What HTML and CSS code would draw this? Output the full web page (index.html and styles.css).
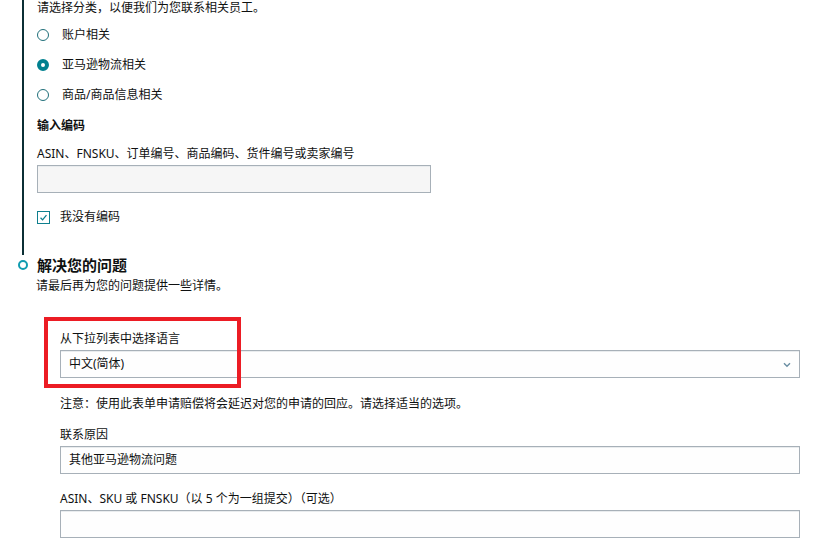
FILE: index.html
```html
<!DOCTYPE html>
<html lang="zh-CN">
<head>
<meta charset="utf-8">
<title>联系卖家支持</title>
<link rel="stylesheet" href="styles.css">
</head>
<body>
<div class="page">
  <section class="step step-one">
    <p class="intro">请选择分类，以便我们为您联系相关员工。</p>
    <div class="radios">
      <label class="radio-row"><span class="radio"></span><span>账户相关</span></label>
      <label class="radio-row"><span class="radio checked"></span><span>亚马逊物流相关</span></label>
      <label class="radio-row"><span class="radio"></span><span>商品/商品信息相关</span></label>
    </div>
    <h3 class="field-title">输入编码</h3>
    <div class="field-label">ASIN、FNSKU、订单编号、商品编码、货件编号或卖家编号</div>
    <div class="input input-disabled short"></div>
    <label class="check-row">
      <span class="checkbox">
        <svg viewBox="0 0 13 13" width="13" height="13"><polyline points="3,6.8 5.4,9.3 10,3.6" fill="none" stroke="#0a7f8f" stroke-width="1.5"/></svg>
      </span>
      <span>我没有编码</span>
    </label>
  </section>

  <section class="step step-two">
    <div class="step-head">
      <span class="marker"></span>
      <h2 class="step-title">解决您的问题</h2>
    </div>
    <p class="step-sub">请最后再为您的问题提供一些详情。</p>

    <div class="form">
      <div class="lang-block">
        <div class="field-label">从下拉列表中选择语言</div>
        <div class="input select">
          <span>中文(简体)</span>
          <svg class="chev" viewBox="0 0 8 6" width="8" height="6"><polyline points="1,1.2 4,4.2 7,1.2" fill="none" stroke="#6a8ea3" stroke-width="1.4"/></svg>
        </div>
        <div class="highlight"></div>
      </div>
      <p class="note">注意：使用此表单申请赔偿将会延迟对您的申请的回应。请选择适当的选项。</p>
      <div class="field-label gap-reason">联系原因</div>
      <div class="input"><span>其他亚马逊物流问题</span></div>
      <div class="field-label gap-asin">ASIN、SKU 或 FNSKU（以 5 个为一组提交）（可选）</div>
      <div class="input"></div>
    </div>
  </section>
</div>
</body>
</html>
```
FILE: styles.css
```css
* { box-sizing: border-box; }

html, body {
  margin: 0;
  padding: 0;
  background: #ffffff;
}

body {
  font-family: "Noto Sans", "Noto Sans CJK SC", sans-serif;
  font-size: 12px;
  color: #0f1111;
  overflow: hidden;
}

.page {
  width: 835px;
}

p, h2, h3 { margin: 0; }

/* ---------- step 1 ---------- */
.step-one {
  margin-left: 22px;
  border-left: 2px solid #0b2f35;
  padding-left: 13px;
  padding-bottom: 29px;
}

.intro {
  line-height: 15px;
  margin-bottom: 5px;
}

.radio-row {
  display: flex;
  align-items: center;
  gap: 13px;
  height: 30px;
  line-height: 18px;
}

.radio {
  width: 12px;
  height: 12px;
  border-radius: 50%;
  border: 1px solid #1f6f7a;
  background: #fff;
  flex: none;
}

.radio.checked {
  border: 4px solid #00808f;
}

.field-title {
  font-size: 12px;
  font-weight: 700;
  line-height: 18px;
  margin-top: 7px;
}

.field-label {
  line-height: 18px;
}

.step-one .field-label {
  margin-top: 10px;
  margin-bottom: 2px;
}

.input {
  height: 28px;
  border: 1px solid #a7b0b8;
  box-shadow: inset 0 1px 0 #e9ecee;
  background: #fefefe;
  display: flex;
  align-items: center;
  padding: 0 8px;
  line-height: 18px;
}

.input-disabled {
  background: #f6f6f6;
}

.short {
  width: 394px;
}

.check-row {
  display: flex;
  align-items: center;
  gap: 10px;
  height: 18px;
  margin-top: 15px;
  line-height: 18px;
}

.checkbox {
  width: 13px;
  height: 13px;
  border: 1px solid #0e7f8e;
  display: flex;
  align-items: center;
  justify-content: center;
  flex: none;
}

.checkbox svg {
  display: block;
}

/* ---------- step 2 ---------- */
.step-head {
  display: flex;
  align-items: center;
  gap: 9px;
  margin-left: 18px;
  height: 20px;
}

.marker {
  width: 10px;
  height: 10px;
  border-radius: 50%;
  border: 2px solid #109cb0;
  background: #fff;
  flex: none;
}

.step-title {
  font-size: 15px;
  font-weight: 700;
  line-height: 20px;
}

.step-sub {
  margin-top: 2px;
  margin-left: 36px;
  line-height: 18px;
}

.form {
  margin-left: 60px;
  width: 740px;
  margin-top: 35px;
}

.lang-block {
  position: relative;
}

.lang-block .field-label {
  margin-bottom: 2px;
}

.select {
  justify-content: space-between;
  padding-right: 8px;
}

.chev {
  display: block;
  margin-top: 1px;
}

.highlight {
  position: absolute;
  left: -16px;
  top: -13px;
  width: 197px;
  height: 71px;
  border: 4px solid #ec1c24;
  pointer-events: none;
}

.note {
  margin-top: 17px;
  line-height: 18px;
}

.gap-reason {
  margin-top: 13px;
  margin-bottom: 2px;
}

.gap-asin {
  margin-top: 16px;
  margin-bottom: 2px;
}
```
